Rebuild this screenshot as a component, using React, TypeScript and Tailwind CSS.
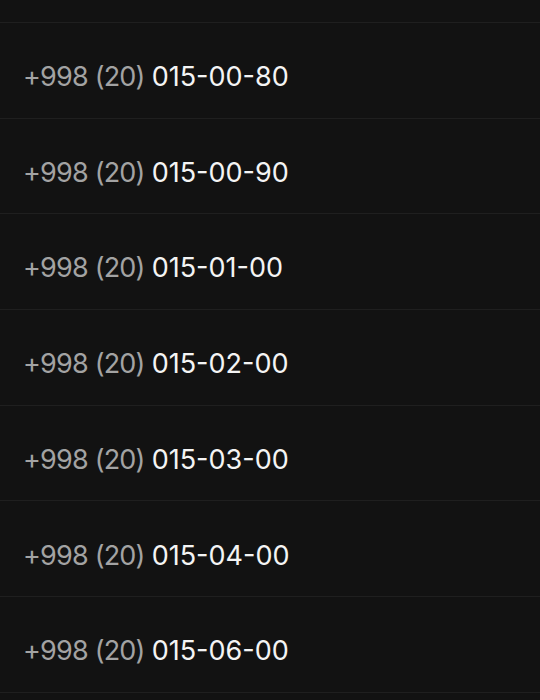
const phones = [
	"015-00-80",
	"015-00-90",
	"015-01-00",
	"015-02-00",
	"015-03-00",
	"015-04-00",
	"015-06-00",
]

export default function App() {
	return (
		<div
			className="w-[540px] h-[700px] overflow-hidden bg-[#121212]"
			style={{ fontFamily: "Inter, 'Noto Sans', sans-serif" }}>
			<div className="h-[23px] border-b border-[#1f1f1f]" />
			{phones.map((num) => (
				<div
					key={num}
					className="h-[95.7px] border-b border-[#1f1f1f] flex items-center pl-[23px] pt-[14px]">
					<span className="text-[27px] tracking-[-0.8px] text-[#a3a3a3]">
						+998 (20)
					</span>
					<span className="ml-[7px] text-[27px] tracking-[0px] text-[#f4f4f4]">
						{num}
					</span>
				</div>
			))}
		</div>
	)
}
